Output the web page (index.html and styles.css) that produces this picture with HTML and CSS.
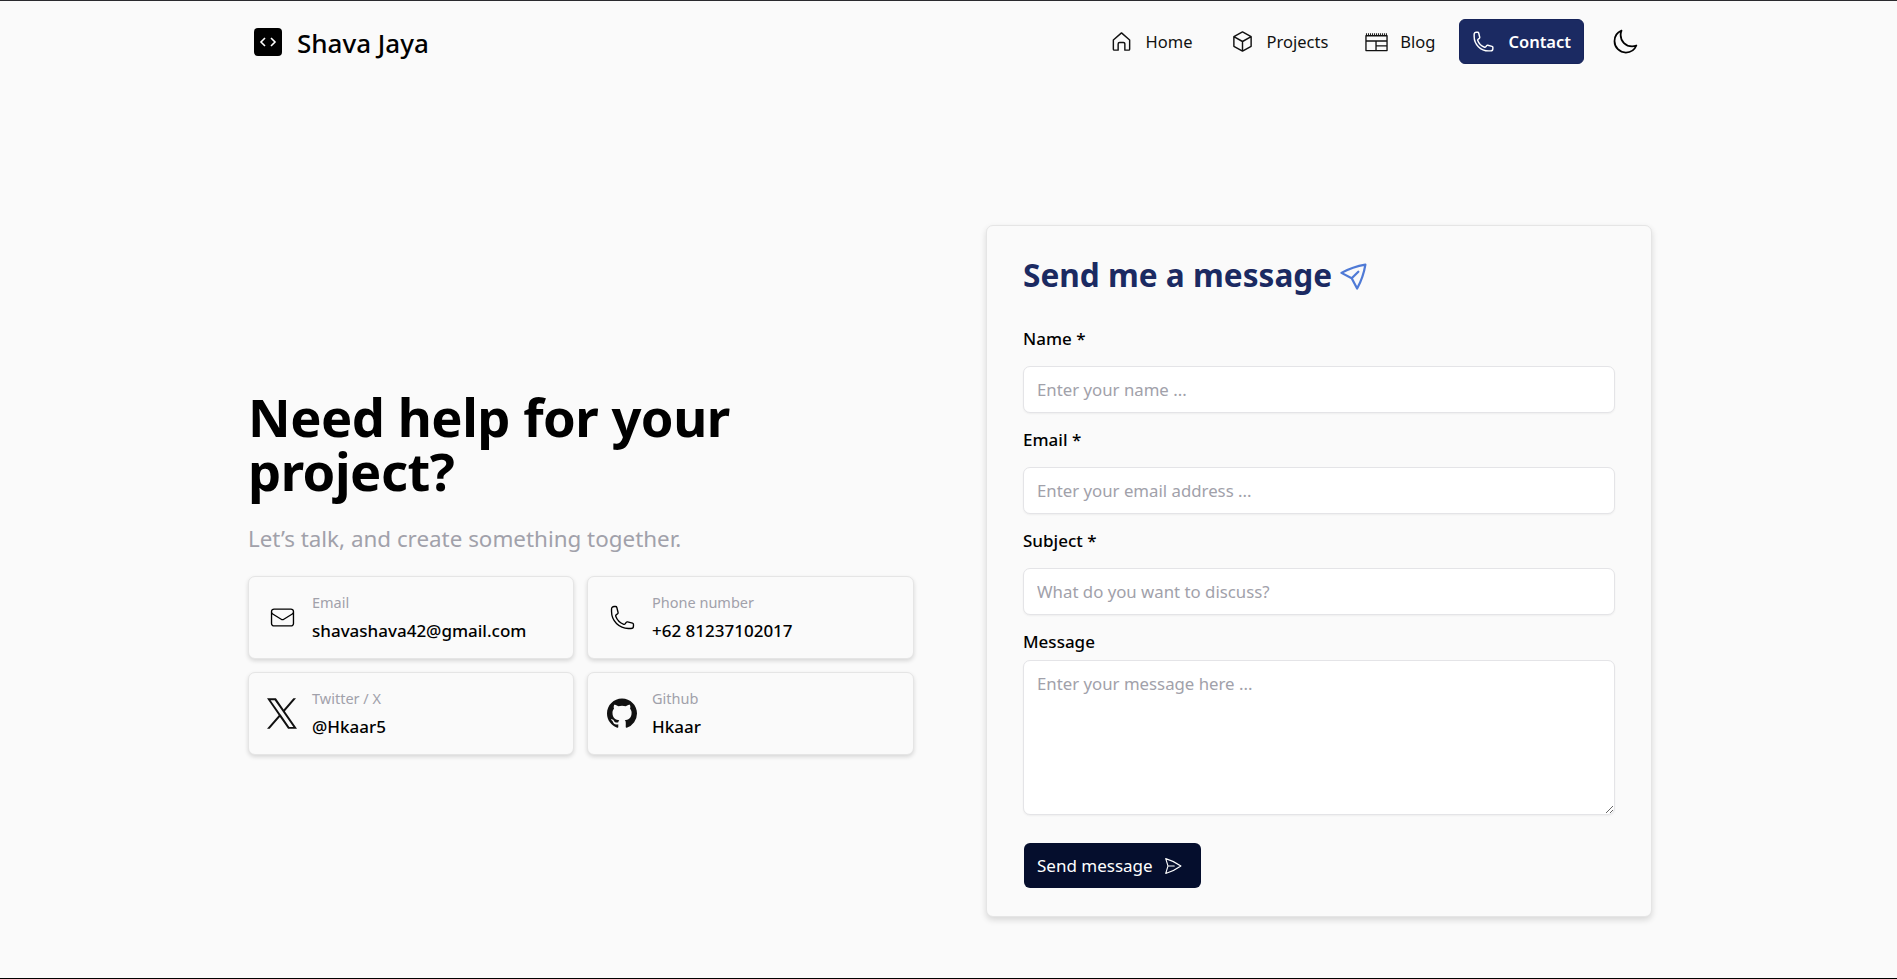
FILE: index.html
```html
<!DOCTYPE html>
<html lang="en">
<head>
    <meta charset="UTF-8">
    <meta name="viewport" content="width=device-width, initial-scale=1.0">
    <title>Shava Jaya - Contact</title>
    <link rel="stylesheet" href="styles.css">
</head>
<body>
    <div class="page">
        <header class="navbar">
            <a class="brand" href="#">
                <span class="brand-logo">
                    <svg viewBox="0 0 28 28" class="brand-code"><path d="M11 10 7 14l4 4M17 10l4 4-4 4"/></svg>
                </span>
                <span class="brand-name">Shava Jaya</span>
            </a>
            <nav class="nav-links">
                <a class="nav-item nav-item-first" href="#">
                    <svg viewBox="0 0 24 24" class="icon nav-icon"><path d="M3.5 10.5 12 3l8.5 7.5V20a1 1 0 0 1-1 1h-4v-6.500a1.500 1.500 0 0 0-1.500-1.500h-4a1.500 1.500 0 0 0-1.500 1.500V21h-4a1 1 0 0 1-1-1z"/></svg>
                    Home
                </a>
                <a class="nav-item" href="#">
                    <svg viewBox="0 0 24 24" class="icon nav-icon"><path d="M12 2 21 7v10l-9 5-9-5V7zM3 7l9 5 9-5M12 12v10"/></svg>
                    Projects
                </a>
                <a class="nav-item nav-item-blog" href="#">
                    <svg viewBox="0 0 26 24" class="icon nav-icon nav-icon-wide"><path d="M2 6h22v15.500H2zM2 11.500h22M12.500 11.500v10M12.500 16.500H24"/><path d="M2 4.500h22" class="dots"/></svg>
                    Blog
                </a>
                <a class="nav-item nav-item-active" href="#">
                    <svg viewBox="0 0 24 24" class="icon nav-icon"><path d="M2.250 6.750c0 8.284 6.716 15 15 15h2.250a2.250 2.250 0 0 0 2.250-2.250v-1.372c0-.516-.351-.966-.852-1.091l-4.423-1.106c-.44-.11-.902.055-1.173.417l-.97 1.293c-.282.376-.769.542-1.210.38a12.035 12.035 0 0 1-7.143-7.143c-.162-.441.004-.928.38-1.210l1.293-.97c.363-.271.527-.734.417-1.173L6.963 3.102a1.125 1.125 0 0 0-1.091-.852H4.500A2.250 2.250 0 0 0 2.250 4.500z"/></svg>
                    Contact
                </a>
                <button class="theme-toggle" type="button" aria-label="Toggle theme">
                    <svg viewBox="0 0 24 24" class="icon moon-icon"><path d="M21.752 15.002A9.718 9.718 0 0 1 18 15.750c-5.385 0-9.750-4.365-9.750-9.750 0-1.330.266-2.597.748-3.752A9.753 9.753 0 0 0 3 11.250C3 16.635 7.365 21 12.750 21a9.753 9.753 0 0 0 9.002-5.998z"/></svg>
                </button>
            </nav>
        </header>

        <main class="contact">
            <section class="intro">
                <h1>Need help for your project?</h1>
                <p class="intro-sub">Let’s talk, and create something together.</p>
                <div class="info-grid">
                    <div class="info-card">
                        <svg viewBox="0 0 24 24" class="icon info-icon"><path d="M21.750 6.750v10.500a2.250 2.250 0 0 1-2.250 2.250h-15a2.250 2.250 0 0 1-2.250-2.250V6.750m19.500 0A2.250 2.250 0 0 0 19.500 4.500h-15a2.250 2.250 0 0 0-2.250 2.250m19.500 0v.243a2.250 2.250 0 0 1-1.070 1.916l-7.500 4.615a2.250 2.250 0 0 1-2.360 0L3.320 8.910a2.250 2.250 0 0 1-1.070-1.916V6.750"/></svg>
                        <div>
                            <div class="info-label">Email</div>
                            <div class="info-value">shavashava42@gmail.com</div>
                        </div>
                    </div>
                    <div class="info-card">
                        <svg viewBox="0 0 24 24" class="icon info-icon"><path d="M2.250 6.750c0 8.284 6.716 15 15 15h2.250a2.250 2.250 0 0 0 2.250-2.250v-1.372c0-.516-.351-.966-.852-1.091l-4.423-1.106c-.44-.11-.902.055-1.173.417l-.97 1.293c-.282.376-.769.542-1.210.38a12.035 12.035 0 0 1-7.143-7.143c-.162-.441.004-.928.38-1.210l1.293-.97c.363-.271.527-.734.417-1.173L6.963 3.102a1.125 1.125 0 0 0-1.091-.852H4.500A2.250 2.250 0 0 0 2.250 4.500z"/></svg>
                        <div>
                            <div class="info-label">Phone number</div>
                            <div class="info-value">+62 81237102017</div>
                        </div>
                    </div>
                    <div class="info-card">
                        <svg viewBox="0 0 1200 1227" class="info-logo"><path d="M714.163 519.284 1160.89 0h-105.860L667.137 450.887 357.328 0H0l468.492 681.821L0 1226.370h105.866l409.625-476.152 327.181 476.152H1200L714.137 519.284zM569.165 687.828l-47.468-67.894-377.686-540.240h162.604l304.797 435.991 47.468 67.894 396.200 566.721H892.476L569.165 687.854z"/></svg>
                        <div>
                            <div class="info-label">Twitter / X</div>
                            <div class="info-value">@Hkaar5</div>
                        </div>
                    </div>
                    <div class="info-card">
                        <svg viewBox="0 0 16 16" class="info-logo"><path d="M8 0C3.580 0 0 3.580 0 8c0 3.540 2.290 6.530 5.470 7.590.4.07.55-.17.55-.38 0-.19-.01-.82-.01-1.490-2.010.37-2.530-.49-2.690-.94-.09-.23-.48-.94-.82-1.130-.28-.15-.68-.52-.01-.53.63-.01 1.080.58 1.230.82.72 1.210 1.870.87 2.330.66.07-.52.28-.87.51-1.070-1.780-.2-3.640-.89-3.640-3.950 0-.87.31-1.590.82-2.150-.08-.2-.36-1.020.08-2.120 0 0 .67-.21 2.200.82.64-.18 1.320-.27 2-.27.68 0 1.360.09 2 .27 1.530-1.040 2.200-.82 2.200-.82.44 1.100.16 1.920.08 2.120.51.56.82 1.270.82 2.150 0 3.070-1.870 3.750-3.650 3.950.29.25.54.73.54 1.480 0 1.070-.01 1.930-.01 2.200 0 .21.15.46.55.38A8.013 8.013 0 0 0 16 8c0-4.420-3.580-8-8-8z"/></svg>
                        <div>
                            <div class="info-label">Github</div>
                            <div class="info-value">Hkaar</div>
                        </div>
                    </div>
                </div>
            </section>

            <form class="message-card">
                <h2>Send me a message
                    <svg viewBox="0 0 24 24" class="icon plane-icon"><path d="M6 12 3.269 3.126A59.768 59.768 0 0 1 21.485 12 59.770 59.770 0 0 1 3.270 20.876L5.999 12zm0 0h7.500"/></svg>
                </h2>
                <label class="field-label" for="name">Name *</label>
                <input class="field-input" id="name" type="text" placeholder="Enter your name ...">
                <label class="field-label" for="email">Email *</label>
                <input class="field-input" id="email" type="text" placeholder="Enter your email address ...">
                <label class="field-label" for="subject">Subject *</label>
                <input class="field-input" id="subject" type="text" placeholder="What do you want to discuss?">
                <label class="field-label field-label-tight" for="message">Message</label>
                <textarea class="field-input field-area" id="message" placeholder="Enter your message here ..."></textarea>
                <button class="send-btn" type="button">
                    Send message
                    <svg viewBox="0 0 24 24" class="icon send-icon"><path d="M6 12 3.269 3.126A59.768 59.768 0 0 1 21.485 12 59.770 59.770 0 0 1 3.270 20.876L5.999 12zm0 0h7.500"/></svg>
                </button>
            </form>
        </main>
    </div>
</body>
</html>
```
FILE: styles.css
```css
* {
    box-sizing: border-box;
}
html, body {
    height: 100%;
}
body {
    margin: 0;
    background-color: #fafafa;
    color: #000;
    font-family: "Noto Sans", "Open Sans", sans-serif;
    overflow: hidden;
}
a {
    color: inherit;
    text-decoration: none;
}
.page {
    height: 979px;
    border-top: 1px solid #2a2a2e;
    border-bottom: 1px solid #000;
}
.icon {
    fill: none;
    stroke: currentColor;
    stroke-width: 1.5;
    stroke-linecap: round;
    stroke-linejoin: round;
}

/* navbar */
.navbar {
    display: flex;
    justify-content: space-between;
    align-items: center;
    height: 81px;
    padding: 0 258px 0 254px;
}
.brand {
    display: flex;
    align-items: center;
    gap: 15px;
}
.brand-logo {
    width: 28px;
    height: 28px;
    background-color: #000;
    border-radius: 4px;
}
.brand-code {
    display: block;
    fill: none;
    stroke: #fff;
    stroke-width: 1.6;
}
.brand-name {
    margin-top: 3px;
    font-size: 26px;
    font-weight: 500;
}
.nav-links {
    display: flex;
    align-items: center;
    font-size: 16.500px;
}
.nav-item {
    display: flex;
    align-items: center;
    gap: 13px;
    height: 45px;
    padding: 0 12px;
    margin-right: 12px;
    border-radius: 6px;
    color: #111;
}
.nav-item-first {
    margin-right: 14px;
}
.nav-item-blog {
    gap: 11px;
}
.nav-icon {
    width: 23px;
    height: 23px;
}
.nav-icon-wide {
    width: 25px;
    stroke-width: 1.4;
}
.dots {
    stroke-width: 2;
    stroke-dasharray: 1.040 1.040;
    stroke-linecap: butt;
}
.nav-item-active {
    background-color: #1b2a62;
    color: #fff;
    font-weight: 600;
    margin-right: 0;
    border: 1px solid #17245a;
}
.theme-toggle {
    display: flex;
    margin-left: 27px;
    padding: 0;
    background: none;
    border: none;
    color: #000;
}
.moon-icon {
    width: 28px;
    height: 28px;
}

/* two columns */
.contact {
    display: grid;
    grid-template-columns: 666px 666px;
    column-gap: 72px;
    align-items: center;
    margin: 143px 0 0 248px;
}
.intro {
    padding-top: 2px;
}
.intro h1 {
    margin: 0;
    font-size: 52.500px;
    font-weight: 700;
    line-height: 54px;
    letter-spacing: -0.5px;
    max-width: 560px;
}
.intro-sub {
    margin: 26px 0 22px;
    font-size: 22.400px;
    line-height: 30px;
    color: #a1a1aa;
}
.info-grid {
    display: grid;
    grid-template-columns: 326px 327px;
    grid-auto-rows: 83px;
    gap: 13px;
}
.info-card {
    display: flex;
    align-items: center;
    gap: 16px;
    padding: 0 20px;
    border: 1px solid #e5e5e5;
    border-radius: 7px;
    background-color: #fafafa;
    box-shadow: 0 2px 4px rgba(0, 0, 0, 0.14);
}
.info-card:nth-child(even) {
    padding-left: 21px;
}
.info-icon {
    flex: none;
    width: 27px;
    height: 27px;
    stroke-width: 1.2;
}
.info-logo {
    flex: none;
    width: 30px;
    height: 31px;
    margin: 0 -1px 0 -2px;
    fill: #111;
}
.info-label {
    font-size: 14.500px;
    line-height: 20px;
    color: #a1a1aa;
}
.info-value {
    margin-top: 8px;
    font-size: 17px;
    line-height: 22px;
    font-weight: 500;
}

/* form */
.message-card {
    display: flex;
    flex-direction: column;
    align-items: flex-start;
    height: 692px;
    padding: 27px 36px;
    border: 1px solid #e5e5e5;
    border-radius: 7px;
    background-color: #fafafa;
    box-shadow: 0 3px 6px rgba(0, 0, 0, 0.14);
}
.message-card h2 {
    display: flex;
    align-items: center;
    gap: 10px;
    margin: 0 0 29px;
    font-size: 31.600px;
    line-height: 44px;
    font-weight: 700;
    color: #1b2a62;
}
.plane-icon {
    width: 30px;
    height: 30px;
    margin-top: -4px;
    color: #4f7ad6;
    stroke-width: 1.8;
    transform: rotate(-45deg);
}
.field-label {
    margin-bottom: 15px;
    font-size: 17px;
    line-height: 25px;
    font-weight: 500;
}
.field-label-tight {
    margin-bottom: 6px;
}
.field-input {
    display: block;
    width: 100%;
    height: 47px;
    margin-bottom: 14px;
    padding: 0 13px;
    border: 1px solid #e4e4e7;
    border-radius: 7px;
    background-color: #fff;
    font: inherit;
    font-size: 16.800px;
    color: #000;
    box-shadow: 0 1px 2px rgba(0, 0, 0, 0.05);
}
.field-input::placeholder {
    color: #a1a1aa;
}
.field-area {
    height: 155px;
    padding: 11px 13px;
    margin-bottom: 28px;
}
.send-btn {
    display: flex;
    align-items: center;
    gap: 10px;
    width: 177px;
    height: 45px;
    margin-left: 1px;
    padding: 0 13px;
    border: none;
    border-radius: 6px;
    background-color: #050e2d;
    color: #fff;
    font: inherit;
    font-size: 17px;
}
.send-icon {
    width: 20px;
    height: 20px;
    stroke-width: 1.3;
}
```
